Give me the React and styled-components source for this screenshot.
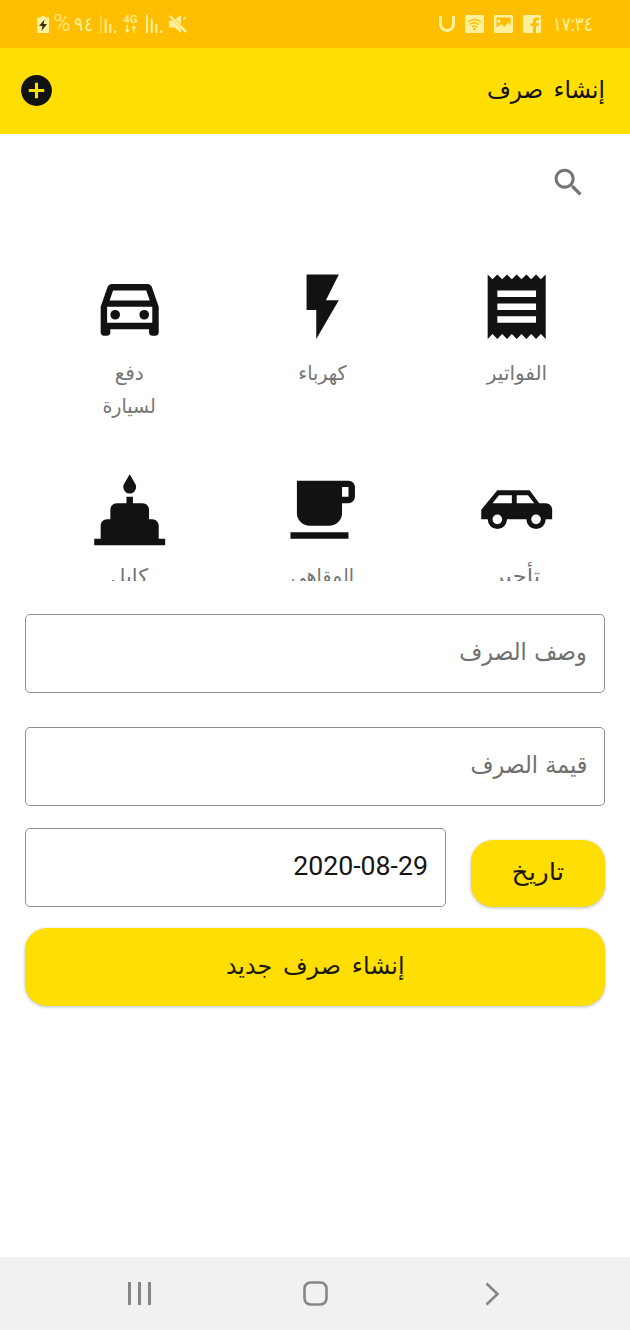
import React from "react";
import styled, { createGlobalStyle } from "styled-components";

const Global = createGlobalStyle`
  * { box-sizing: border-box; }
  body { margin: 0; background: #fff; }
  button { font: inherit; color: inherit; border: 0; background: none; padding: 0; margin: 0; }
`;

const Screen = styled.div`
  width: 630px;
  height: 1330px;
  display: flex;
  flex-direction: column;
  background: #fff;
  color: #121212;
  overflow: hidden;
  font-family: Roboto, "DejaVu Sans", sans-serif;
`;

const StatusBar = styled.div`
  height: 48px;
  flex: none;
  background: #ffbf00;
  color: #fff09c;
  display: flex;
  justify-content: space-between;
  align-items: center;
  padding: 0 37px 0 36.500px;
`;

const StatusGroup = styled.div`
  display: flex;
  align-items: center;
  gap: ${(p) => p.$gap}px;
`;

const Battery = styled.div`
  display: flex;
  align-items: center;
  width: 38px;
  justify-content: space-between;
  font-size: 23px;
  line-height: 30px;
  font-weight: 300;
`;

const Clock = styled.div`
  display: flex;
  justify-content: flex-end;
  width: 42px;
`;

const Network = styled.div`
  display: flex;
  flex-direction: column;
  align-items: center;
  width: 15px;
  font-size: 11px;
  line-height: 10px;
  font-weight: 600;
`;

const AppBar = styled.header`
  height: 86px;
  flex: none;
  background: #ffde03;
  display: flex;
  align-items: center;
  justify-content: space-between;
  padding: 0 25px 2px 18px;
`;

const Glyph = styled.svg`
  display: block;
  flex: none;
  width: ${(p) => p.$w}px;
  height: ${(p) => p.$h || p.$w}px;
  fill: currentColor;
`;

const Label = styled.span`
  flex: none;
  direction: rtl;
  height: 33px;
  line-height: 33px;
  font-size: ${(p) => p.$size}px;
  word-spacing: ${(p) => p.$gap || 0}px;
  white-space: nowrap;
  transform: scaleX(${(p) => p.$stretch || 1});
  transform-origin: ${(p) => p.$origin || "center"};
`;

const SearchRow = styled.div`
  height: 96px;
  flex: none;
  display: flex;
  justify-content: flex-end;
  align-items: center;
  padding: 1px 43px 0 0;
  color: #747474;
`;

const Categories = styled.div`
  height: 351px;
  flex: none;
  overflow: hidden;
  display: grid;
  grid-template-columns: 193.400px 193.600px 195px;
  grid-auto-rows: 203px;
  padding: 37.500px 0 0 32.500px;
`;

const Category = styled.div`
  display: flex;
  flex-direction: column;
  align-items: center;
`;

const Caption = styled.div`
  margin-top: 12px;
  color: #757575;
  display: flex;
  flex-direction: column;
  align-items: center;
`;

const Form = styled.main`
  flex: 1;
  display: flex;
  flex-direction: column;
  padding: 33px 25px 0;
`;

const Field = styled.div`
  height: 79px;
  width: ${(p) => p.$w || 580}px;
  flex: none;
  border: 1.500px solid #8e8e8e;
  border-radius: 5px;
  display: flex;
  align-items: center;
  justify-content: flex-end;
  padding: 0 17px 3px;
  margin-bottom: ${(p) => p.$mb || 0}px;
  color: #6f6f6f;
`;

const DateValue = styled.span`
  font-size: 26.700px;
  color: #151515;
`;

const DateRow = styled.div`
  display: flex;
  justify-content: space-between;
  align-items: flex-end;
  margin-bottom: 21px;
`;

const Button = styled.button`
  height: ${(p) => p.$h}px;
  width: ${(p) => p.$w}px;
  padding: 0 0 ${(p) => p.$lift || 0}px;
  border-radius: 22px;
  background: #ffde03;
  color: #1c1805;
  display: flex;
  align-items: center;
  justify-content: center;
  box-shadow: 0 1px 3.500px rgba(0, 0, 0, 0.28);
`;

const NavBar = styled.nav`
  height: 73px;
  flex: none;
  background: #f1f1f1;
  color: #868686;
  display: grid;
  grid-template-columns: 175px 182px 15px;
  align-items: center;
  padding-left: 128px;
`;

const CATEGORIES = [
  {
    lines: [
      { text: "دفع" },
      { text: "لسيارة", stretch: 0.95 },
    ],
    d: "M18.92 6.01C18.72 5.42 18.16 5 17.5 5h-11c-.66 0-1.21.42-1.42 1.01L3 12v8c0 .55.45 1 1 1h1c.55 0 1-.45 1-1v-1h12v1c0 .55.45 1 1 1h1c.55 0 1-.45 1-1v-8l-2.08-5.99zM6.85 7h10.29l1.08 3.11H5.77L6.85 7zM19 17H5v-5h14v5zM7.5 13a1.5 1.5 0 1 1 0 3 1.5 1.5 0 0 1 0-3zM16.5 13a1.5 1.5 0 1 1 0 3 1.5 1.5 0 0 1 0-3z",
  },
  {
    lines: [{ text: "كهرباء", stretch: 0.95 }],
    d: "M7 2v11h3v9l7-12h-4l4-8z",
  },
  {
    lines: [{ text: "الفواتير" }],
    d: "M18 17H6v-2h12v2zm0-4H6v-2h12v2zm0-4H6V7h12v2zM3 22l1.5-1.5L6 22l1.5-1.5L9 22l1.5-1.5L12 22l1.5-1.5L15 22l1.5-1.5L18 22l1.5-1.5L21 22V2l-1.5 1.5L18 2l-1.5 1.5L15 2l-1.5 1.5L12 2l-1.5 1.5L9 2 7.5 3.5 6 2 4.5 3.5 3 2v20z",
  },
  {
    lines: [{ text: "كابل", stretch: 1.04 }],
    d: "M21 21v-4c0-1.11-.9-2-2-2h-1v-3c0-1.11-.9-2-2-2h-3V8h-2v2H8c-1.11 0-2 .89-2 2v3H5c-1.11 0-2 .89-2 2v4H1v2h22v-2M12 7a2 2 0 0 0 2-2c0-.38-.1-.73-.29-1.03L12 1l-1.72 2.97C10.1 4.27 10 4.62 10 5a2 2 0 0 0 2 2z",
  },
  {
    lines: [{ text: "المقاهي", stretch: 0.95 }],
    d: "M2 21h18v-2H2M20 8h-2V5h2m0-2H4v10a4 4 0 0 0 4 4h6a4 4 0 0 0 4-4v-3h2a2 2 0 0 0 2-2V5c0-1.11-.9-2-2-2z",
  },
  {
    lines: [{ text: "تأجير", stretch: 1.15 }],
    d: "M16 6H6l-5 6v3h2a3 3 0 0 0 6 0h6a3 3 0 0 0 6 0h2v-3c0-1.11-.89-2-2-2h-2l-3-4M6.5 7.5h4V10h-6l2-2.5m5.5 0h3.5l1.96 2.5H12V7.5M6 13.5a1.5 1.5 0 1 1 0 3 1.5 1.5 0 0 1 0-3m12 0a1.5 1.5 0 1 1 0 3 1.5 1.5 0 0 1 0-3z",
  },
];

function Signal({ faint }) {
  return (
    <Glyph $w={16} $h={18} viewBox="0 0 16 18">
      <path d="M0 0h2v18H0z" opacity={faint ? 0.45 : 1} />
      <path d="M4.700 4h2v14h-2zM9.300 9h2v9h-2zM14 15.500h2V18h-2z" />
    </Glyph>
  );
}

export default function App() {
  return (
    <Screen>
      <Global />
      <StatusBar>
        <StatusGroup $gap={8}>
          <StatusGroup $gap={5}>
            <Glyph $w={12} $h={17} viewBox="0 0 12 17">
              <path d="M4 0h4v1.500h3.500l.5.5v14.500l-.5.5H.5L0 16.500V2l.5-.5H4z" />
              <path d="M7.500 3.500 2 10h3.500l-1 5L10 8H6.500z" fill="#3a2c00" />
            </Glyph>
            <Battery dir="ltr">
              <span>%</span>
              <Label $size={20} $stretch={0.86} $origin="right">٩٤</Label>
            </Battery>
          </StatusGroup>
          <StatusGroup $gap={7.5}>
            <Signal faint />
            <Network>
              4G
              <Glyph $w={13} $h={8} viewBox="0 0 13 8">
                <path d="M2.500 0h1.500v4.500h2L3.250 8 .5 4.500h2zM9 8h1.500V3.500h2L9.750 0 7 3.500h2z" />
              </Glyph>
            </Network>
            <Signal />
            <Glyph $w={18} $h={18} viewBox="0 0 18 18">
              <path d="M0 5.500h3.500L12 14v4l-6-5.500H0zM6.500 4 12 0v9zM1.500 0 18 16l-1.500 2L0 1.500zM14 3.500l2-2 1 1-2 2z" />
            </Glyph>
          </StatusGroup>
        </StatusGroup>
        <StatusGroup $gap={10}>
          <Glyph $w={16} $h={16} viewBox="0 0 16 16">
            <path d="M0 0h3v8a5 5 0 0 0 10 0V0h3v8A8 8 0 0 1 0 8z" />
          </Glyph>
          <Glyph $w={19} $h={18} viewBox="0 0 19 18">
            <path d="M1 0h17l1 1v16l-1 1H1l-1-1V1z" />
            <g fill="none" stroke="#ffbf00" strokeWidth="1.400">
              <path d="M3 7q6.500-5 13 0M5 9.500q4.500-3.500 9 0M7 12q2.500-2 5 0" />
            </g>
            <circle cx="9.500" cy="14" r="1.300" fill="#ffbf00" />
          </Glyph>
          <Glyph $w={19} $h={18} viewBox="0 0 19 18">
            <path
              d="M1 0h17l1 1v16l-1 1H1l-1-1V1zM2.500 2.500v10L7 9l3.500 3L14 7.500l2.500 3V2.500zM5 4.500a1.700 1.700 0 1 1 0 3.400 1.700 1.700 0 0 1 0-3.400"
              fillRule="evenodd"
            />
          </Glyph>
          <Glyph $w={18} $h={18} viewBox="0 0 18 18">
            <path d="M1 0h16l1 1v16l-1 1h-4v-7h2.500l.5-2.800h-3V6.500q0-1.300 1.500-1.300H16V2.500h-2.500Q10 2.500 10 6v2.200H7.500V11H10v7H1l-1-1V1z" />
          </Glyph>
          <Clock>
            <Label $size={20} $stretch={0.84} $origin="right">١٧:٣٤</Label>
          </Clock>
        </StatusGroup>
      </StatusBar>
      <AppBar>
        <Glyph $w={37} viewBox="0 0 24 24">
          <path d="M12 2C6.480 2 2 6.480 2 12s4.480 10 10 10 10-4.480 10-10S17.520 2 12 2zm5 11h-4v4h-2v-4H7v-2h4V7h2v4h4v2z" />
        </Glyph>
        <Label $size={24} $gap={5} $stretch={0.96} $origin="right">إنشاء صرف</Label>
      </AppBar>
      <SearchRow>
        <Glyph $w={37} viewBox="0 0 24 24">
          <path d="M15.500 14h-.79l-.28-.27C15.410 12.590 16 11.110 16 9.500 16 5.910 13.090 3 9.500 3S3 5.910 3 9.500 5.910 16 9.500 16c1.610 0 3.090-.59 4.230-1.570l.27.28v.79l5 4.990L20.490 19l-4.990-5zm-6 0C7.010 14 5 11.990 5 9.500S7.010 5 9.500 5 14 7.010 14 9.500 11.990 14 9.500 14z" />
        </Glyph>
      </SearchRow>
      <Categories>
        {CATEGORIES.map((c) => (
          <Category key={c.lines[0].text}>
            <Glyph $w={77.4} viewBox="0 0 24 24">
              <path d={c.d} fillRule="evenodd" />
            </Glyph>
            <Caption>
              {c.lines.map((l) => (
                <Label key={l.text} $size={20} $stretch={l.stretch}>
                  {l.text}
                </Label>
              ))}
            </Caption>
          </Category>
        ))}
      </Categories>
      <Form>
        <Field $mb={34}>
          <Label $size={24} $gap={2} $stretch={0.925} $origin="right">وصف الصرف</Label>
        </Field>
        <Field $mb={22}>
          <Label $size={24} $gap={2} $stretch={0.925} $origin="right">قيمة الصرف</Label>
        </Field>
        <DateRow>
          <Field $w={421}>
            <DateValue>2020-08-29</DateValue>
          </Field>
          <Button $w={134} $h={67} $lift={2}>
            <Label $size={24} $stretch={1.1}>تاريخ</Label>
          </Button>
        </DateRow>
        <Button $w={580} $h={78} $lift={1}>
          <Label $size={24} $gap={5} $stretch={0.99}>إنشاء صرف جديد</Label>
        </Button>
      </Form>
      <NavBar>
        <Glyph $w={23} viewBox="0 0 23 23">
          <path d="M0 0h3v23H0zM10 0h3v23h-3zM20 0h3v23h-3z" />
        </Glyph>
        <Glyph $w={25} viewBox="0 0 25 25">
          <rect x="1.500" y="1.500" width="22" height="22" rx="6" fill="none" stroke="currentColor" strokeWidth="2.600" />
        </Glyph>
        <Glyph $w={15} $h={24} viewBox="0 0 15 24">
          <path d="M1.500 1.500 12.500 12 1.500 22.500" fill="none" stroke="currentColor" strokeWidth="2.600" />
        </Glyph>
      </NavBar>
    </Screen>
  );
}
